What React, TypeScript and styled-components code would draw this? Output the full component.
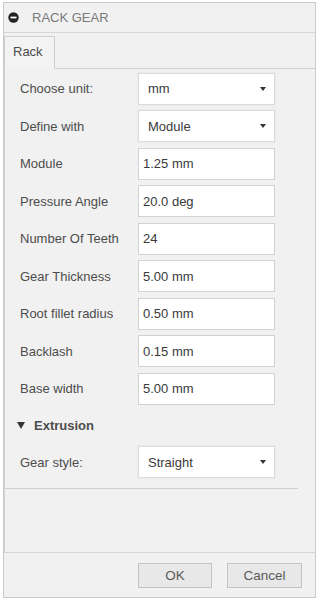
import React from "react";
import styled, { createGlobalStyle } from "styled-components";

const Global = createGlobalStyle`
  html, body { margin: 0; padding: 0; background: #ffffff; }
  body { font-family: "Liberation Sans", Arial, sans-serif; }
  * { box-sizing: border-box; }
`;

const Panel = styled.div`
  margin: 2px 0 0 3px;
  width: 313px;
  height: 596px;
  border: 1px solid #cacaca;
  background: #f1f1f1;
  display: flex;
  flex-direction: column;
  font-size: 13px;
`;

const TitleBar = styled.div`
  height: 30px;
  border-bottom: 1px solid #d6d6d6;
  display: flex;
  align-items: center;
  padding-left: 4px;
  gap: 13px;
  color: #7a7a7a;
  font-size: 13px;
`;

const TabBar = styled.div`
  height: 36px;
  border-bottom: 1px solid #cfcfcf;
  display: flex;
  align-items: flex-end;
`;

const Tab = styled.div`
  height: 33px;
  width: 51px;
  margin-bottom: -1px;
  border: 1px solid #cfcfcf;
  border-bottom: 1px solid #f1f1f1;
  background: #f3f3f3;
  color: #4a4a4a;
  padding: 7px 0 0 8px;
`;

const Content = styled.div`
  flex: 1;
  border-left: 1px solid #d2d2d2;
  padding-top: 1px;
  display: flex;
  flex-direction: column;
`;

const Row = styled.div`
  height: 37.5px;
  display: grid;
  grid-template-columns: 118px 137px;
  align-items: center;
  padding-left: 15px;
`;

const Label = styled.span`
  color: #4d4d4d;
`;

const Field = styled.div<{ $select?: boolean }>`
  height: 32px;
  background: #ffffff;
  border: 1px solid ${(p) => (p.$select ? "#dcdcdc" : "#d2d2d2")};
  box-shadow: ${(p) => (p.$select ? "0 0 0 1px #ebebeb" : "none")};
  display: flex;
  align-items: center;
  justify-content: space-between;
  padding: 0 8px 0 ${(p) => (p.$select ? "9px" : "4px")};
  color: #3a3a3a;
`;

const Arrow = styled.span`
  width: 0;
  height: 0;
  border-left: 3.5px solid transparent;
  border-right: 3.5px solid transparent;
  border-top: 4.5px solid #333333;
`;

const GroupHeader = styled.div`
  height: 36px;
  display: flex;
  align-items: center;
  gap: 9px;
  padding-left: 12px;
  font-weight: bold;
  color: #4d4d4d;
`;

const DownTriangle = styled.span`
  width: 0;
  height: 0;
  border-left: 4.5px solid transparent;
  border-right: 4.5px solid transparent;
  border-top: 7px solid #333333;
`;

const Separator = styled.div`
  margin-top: 7px;
  width: 293px;
  height: 1px;
  background: #cfcfcf;
`;

const Footer = styled.div`
  height: 45px;
  border-top: 1px solid #d4d4d4;
  display: flex;
  justify-content: flex-end;
  align-items: flex-start;
  padding: 10px 13px 0 0;
  gap: 15px;
`;

const Button = styled.button<{ $w: number }>`
  width: ${(p) => p.$w}px;
  height: 25px;
  background: #e8e8e8;
  border: 1px solid #c4c4c4;
  border-radius: 0;
  color: #5a5a5a;
  font-family: "Liberation Sans", Arial, sans-serif;
  font-size: 13.5px;
  padding: 0;
`;

const TitleIcon = () => (
  <svg width="11" height="11" viewBox="0 0 11 11">
    <circle cx="5.5" cy="5.5" r="5.2" fill="#222" />
    <rect x="2.5" y="4.6" width="6" height="1.8" fill="#fff" />
  </svg>
);

const fields: { label: string; value: string; select?: boolean }[] = [
  { label: "Choose unit:", value: "mm", select: true },
  { label: "Define with", value: "Module", select: true },
  { label: "Module", value: "1.25 mm" },
  { label: "Pressure Angle", value: "20.0 deg" },
  { label: "Number Of Teeth", value: "24" },
  { label: "Gear Thickness", value: "5.00 mm" },
  { label: "Root fillet radius", value: "0.50 mm" },
  { label: "Backlash", value: "0.15 mm" },
  { label: "Base width", value: "5.00 mm" },
];

export default function App() {
  return (
    <>
      <Global />
      <Panel>
        <TitleBar>
          <TitleIcon />
          <span>RACK GEAR</span>
        </TitleBar>
        <TabBar>
          <Tab>Rack</Tab>
        </TabBar>
        <Content>
          {fields.map((f) => (
            <Row key={f.label}>
              <Label>{f.label}</Label>
              <Field $select={f.select}>
                <span>{f.value}</span>
                {f.select && <Arrow />}
              </Field>
            </Row>
          ))}
          <GroupHeader>
            <DownTriangle />
            <span>Extrusion</span>
          </GroupHeader>
          <Row>
            <Label>Gear style:</Label>
            <Field $select>
              <span>Straight</span>
              <Arrow />
            </Field>
          </Row>
          <Separator />
        </Content>
        <Footer>
          <Button $w={74}>OK</Button>
          <Button $w={75}>Cancel</Button>
        </Footer>
      </Panel>
    </>
  );
}
